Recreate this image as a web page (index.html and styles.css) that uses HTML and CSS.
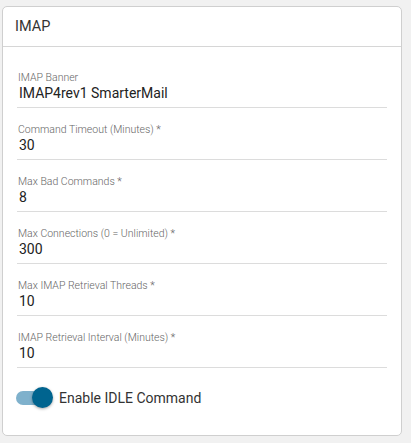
FILE: index.html
```html
<!DOCTYPE html>
<html>
<head>
<meta charset="utf-8">
<link rel="stylesheet" href="styles.css">
</head>
<body>
<div class="card">
  <div class="card-header">IMAP</div>
  <div class="card-body">
    <div class="field">
      <label class="field-label">IMAP Banner</label>
      <div class="field-value">IMAP4rev1 SmarterMail</div>
    </div>
    <div class="field">
      <label class="field-label">Command Timeout (Minutes) *</label>
      <div class="field-value">30</div>
    </div>
    <div class="field">
      <label class="field-label">Max Bad Commands *</label>
      <div class="field-value">8</div>
    </div>
    <div class="field">
      <label class="field-label">Max Connections (0 = Unlimited) *</label>
      <div class="field-value">300</div>
    </div>
    <div class="field">
      <label class="field-label">Max IMAP Retrieval Threads *</label>
      <div class="field-value">10</div>
    </div>
    <div class="field">
      <label class="field-label">IMAP Retrieval Interval (Minutes) *</label>
      <div class="field-value">10</div>
    </div>
    <div class="toggle-row">
      <span class="toggle"><span class="toggle-track"></span><span class="toggle-knob"></span></span>
      <span class="toggle-label">Enable IDLE Command</span>
    </div>
  </div>
</div>
</body>
</html>
```

FILE: styles.css
```css
html, body {
  margin: 0;
  padding: 0;
  background: #f1f1f1;
  font-family: Roboto, "Liberation Sans", sans-serif;
}

.card {
  box-sizing: border-box;
  margin: 6px 0 0 2px;
  width: 400px;
  height: 430px;
  background: #fff;
  border: 1px solid #cfcfcf;
  border-radius: 5px;
}

.card-header {
  height: 39px;
  border-bottom: 1px solid #d6d6d6;
  padding-left: 12px;
  display: flex;
  align-items: center;
  font-size: 14.5px;
  color: #333;
}

.card-body {
  padding: 25px 14px 0 14px;
  display: flex;
  flex-direction: column;
  gap: 16px;
}

.field {
  display: flex;
  flex-direction: column;
  border-bottom: 1px solid #dcdcdc;
  padding-bottom: 5px;
}

.field-label {
  font-size: 10.5px;
  line-height: 12px;
  font-weight: 300;
  color: #666;
  padding-left: 1px;
}

.field-value {
  font-size: 14px;
  line-height: 18px;
  color: #222;
  padding-left: 2px;
}

.toggle-row {
  display: flex;
  align-items: center;
  gap: 6px;
  margin-top: 3px;
}

.toggle {
  position: relative;
  width: 37px;
  height: 21px;
  margin-left: -1px;
  flex: none;
}

.toggle-track {
  position: absolute;
  left: 0;
  top: 4px;
  width: 32px;
  height: 14px;
  border-radius: 7px;
  background: #7fb1cc;
}

.toggle-knob {
  position: absolute;
  right: 0;
  top: 0;
  width: 21px;
  height: 21px;
  border-radius: 50%;
  background: #00648f;
  box-shadow: 0 1px 3px rgba(0,0,0,0.35);
}

.toggle-label {
  font-size: 14px;
  color: #333;
}
```
